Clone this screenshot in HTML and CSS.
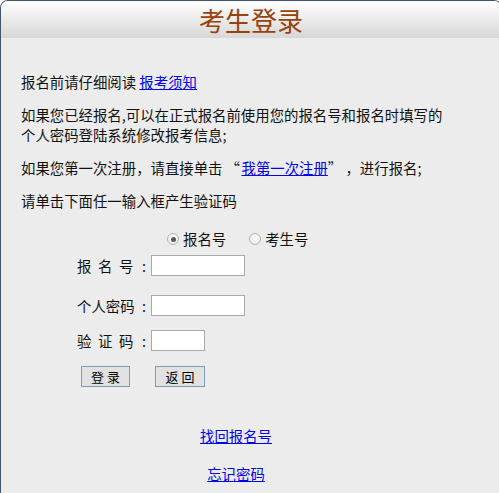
FILE: index.html
```html
<!DOCTYPE html>
<html lang="zh-CN">
<head>
<meta charset="utf-8">
<title>考生登录</title>
<link rel="stylesheet" href="styles.css">
</head>
<body>
<div class="box">
  <div class="header">考生登录</div>
  <div class="content">
    <p class="para">报名前请仔细阅读 <a href="#">报考须知</a></p>
    <p class="para">如果您已经报名,可以在正式报名前使用您的报名号和报名时填写的<br>个人密码登陆系统修改报考信息;</p>
    <p class="para">如果您第一次注册，请直接单击<span class="quote">“</span><a href="#">我第一次注册</a>” ，进行报名;</p>
    <p class="para">请单击下面任一输入框产生验证码</p>

    <div class="radios">
      <label class="radio-item"><input type="radio" name="t" class="radio" checked>报名号</label>
      <label class="radio-item second"><input type="radio" name="t" class="radio">考生号</label>
    </div>

    <div class="row row1">
      <span class="lbl"><span class="spaced">报 名 号</span><span class="colon">:</span></span>
      <input type="text" class="field">
    </div>
    <div class="row row2">
      <span class="lbl"><span>个人密码</span><span class="colon">:</span></span>
      <input type="password" class="field">
    </div>
    <div class="row row3">
      <span class="lbl"><span class="spaced">验 证 码</span><span class="colon">:</span></span>
      <input type="text" class="field short">
    </div>
    <div class="buttons">
      <button class="btn">登 录</button>
      <button class="btn">返 回</button>
    </div>

    <div class="links">
      <p class="link-line"><a href="#">找回报名号</a></p>
      <p class="link-line second-link"><a href="#">忘记密码</a></p>
    </div>
  </div>
</div>
</body>
</html>
```
FILE: styles.css
```css
html, body {
  margin: 0;
  padding: 0;
  background: #ffffff;
}
body {
  font-family: "Noto Sans CJK SC", "Noto Sans", sans-serif;
  font-size: 14.4px;
  color: #111;
  overflow: hidden;
}
.box {
  width: 500px;
  height: 492px;
  border: 1px solid #43546c;
  border-bottom: none;
  border-radius: 8px 8px 0 0;
  background: #ececec;
  overflow: hidden;
}
.header {
  height: 37px;
  line-height: 37px;
  text-align: center;
  font-size: 26px;
  color: #97420a;
  background: linear-gradient(#ffffff, #d7d7d7);
}
.content {
  padding: 34px 0 0 20px;
}
.para {
  margin: 0 0 13px;
  line-height: 20px;
}
.quote {
  display: inline-block;
  width: 16px;
  padding-left: 3px;
  text-align: left;
}
a {
  color: #0000ee;
  text-decoration: underline;
}
.radios {
  display: flex;
  align-items: center;
  height: 20px;
  margin-top: 18px;
  padding-left: 146px;
}
.radio-item {
  display: flex;
  align-items: center;
  line-height: 20px;
}
.radio-item.second {
  margin-left: 23px;
}
.radio {
  appearance: none;
  -webkit-appearance: none;
  width: 12px;
  height: 12px;
  margin: 0 4px 0 0;
  border: 1px solid #b4b4b4;
  border-radius: 50%;
  background: radial-gradient(circle at 50% 40%, #ffffff, #e4e4e4);
  position: relative;
}
.radio:checked::after {
  content: "";
  position: absolute;
  left: 2.5px;
  top: 2.5px;
  width: 5px;
  height: 5px;
  border-radius: 50%;
  background: #5a5a5a;
}
.row {
  display: flex;
  align-items: center;
  padding-left: 56px;
}
.row1 { margin-top: 6px; }
.row2 { margin-top: 19px; }
.row3 { margin-top: 14px; }
.lbl {
  display: flex;
  width: 74px;
  line-height: 21px;
}
.spaced {
  word-spacing: 3.4px;
}
.colon {
  margin-left: auto;
  padding-right: 5px;
}
.field {
  box-sizing: border-box;
  width: 94px;
  height: 21px;
  margin: 0;
  border: 1px solid #a9a9a9;
  background: #fff;
  padding: 1px 3px;
  font-size: 13px;
}
.field.short {
  width: 54px;
}
.buttons {
  display: flex;
  margin-top: 15px;
  padding-left: 60px;
  gap: 25px;
}
.btn {
  box-sizing: border-box;
  width: 49px;
  height: 21px;
  margin: 0;
  padding: 0;
  border: 1px solid #7d9cbc;
  background: #e1e1e1;
  font-family: "Noto Sans CJK SC", sans-serif;
  font-size: 13px;
  line-height: 19px;
  color: #000;
}
.btn + .btn {
  width: 50px;
}
.links {
  width: 430px;
  text-align: center;
  margin-top: 39px;
}
.link-line {
  margin: 0;
  line-height: 20px;
}
.second-link {
  margin-top: 18px;
}
```
